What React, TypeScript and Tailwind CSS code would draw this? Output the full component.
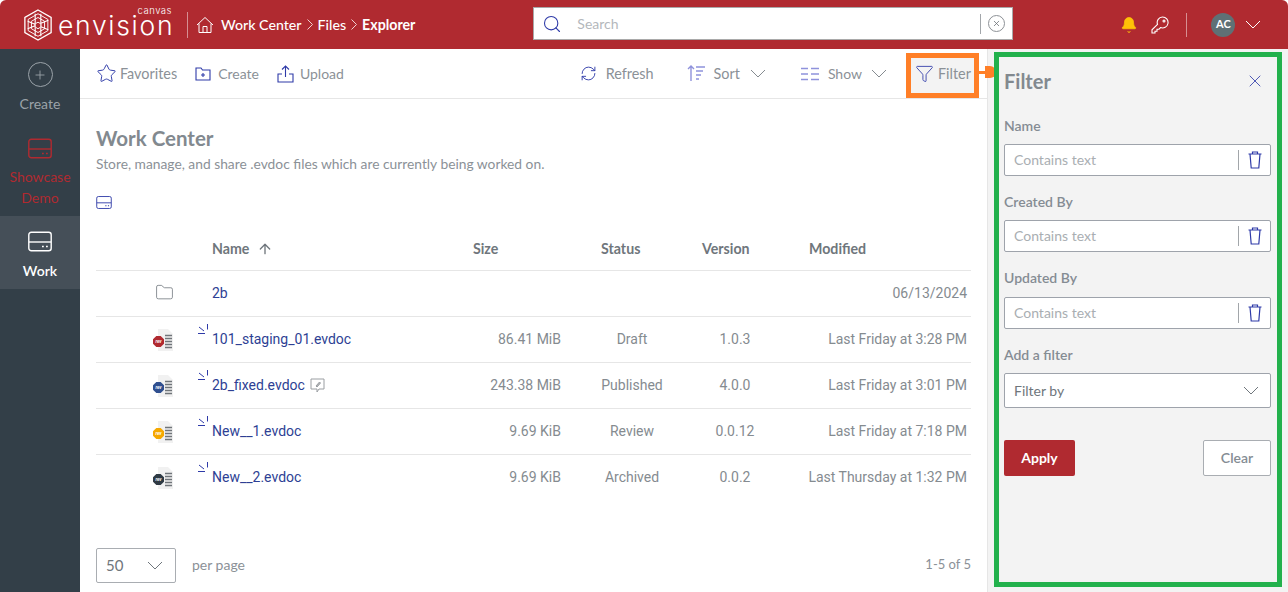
import React from "react";
import { ArrowUp, Search, Bell, Star, RefreshCw, Filter, Folder, Plus, X } from "lucide-react";

const lato = { fontFamily: '"Lato", "Noto Sans", sans-serif' };
const roboto = { fontFamily: 'Roboto, "Noto Sans", sans-serif' };

function Drive({ className }: { className: string }) {
  return (
    <svg viewBox="0 0 24 20" fill="none" stroke="currentColor" strokeWidth="1.4" className={className}>
      <rect x="0.8" y="0.8" width="22.4" height="18.4" rx="2.5" />
      <path d="M1 10.500h22" />
      <path d="M14 15h1.800M18 15h1.800" strokeWidth="1.600" />
    </svg>
  );
}

function Chev({ className = "" }: { className?: string }) {
  return (
    <svg viewBox="0 0 16 9" fill="none" stroke="currentColor" strokeWidth="1" className={`h-[9px] w-[16px] shrink-0 ${className}`}>
      <path d="M1 1l7 7 7-7" />
    </svg>
  );
}

function Crumb() {
  return (
    <svg viewBox="0 0 6 11" fill="none" stroke="#f0d0d0" strokeWidth="1" className="mx-[5px] h-[11px] w-[6px] shrink-0">
      <path d="M.5.5l5 5-5 5" />
    </svg>
  );
}

function TrashIcon() {
  return (
    <svg viewBox="0 0 14 18" fill="none" stroke="#2e3aa8" strokeWidth="1.200" className="h-[18px] w-[14px]">
      <path d="M.5 3h13M4.500 3V1h5v2M2 3l1.200 14h7.600L12 3" />
    </svg>
  );
}

function Logo() {
  return (
    <svg viewBox="0 0 32 34" fill="none" stroke="white" strokeWidth="1" className="h-[32px] w-[30px] shrink-0">
      <path d="M16 1 30 9v16l-14 8-14-8V9z" strokeWidth="1.400" />
      <path d="M16 5 26.500 11v12L16 29 5.500 23V11z" />
      <path d="M16 9l7 4v8l-7 4-7-4v-8z" />
      <path d="M13 5v24M19 5v24M5 13l22 9M5 21l22-9" strokeWidth="1.200" />
      <path d="M16 14l3 1.700v3.400L16 21l-3-1.900v-3.400z" fill="#b02a30" />
    </svg>
  );
}

function Tool({ icon, label, className = "", textClass = "text-[14px]" }: { icon: React.ReactNode; label: string; className?: string; textClass?: string }) {
  return (
    <div className={`flex items-center ${className}`}>
      {icon}
      <span className={`${textClass} text-[#8b9197]`}>{label}</span>
    </div>
  );
}

function FileIcon({ color }: { color: string }) {
  return (
    <svg viewBox="0 0 20 22" className="h-[22px] w-[20px]">
      <path d="M5 0h10l5 5v17H5z" fill="#f1f1f1" />
      <path d="M12 6.500h7M12 9.500h7M12 12.500h7M12 15.500h7M12 18.500h7" stroke="#70757a" strokeWidth="1.400" />
      <path d="M3.300 7h4.400L11 10.300v4.400L7.700 18H3.300L0 14.700v-4.400z" fill={color} />
      <text x="5.500" y="14" textAnchor="middle" fontSize="4.500" fontStyle="italic" fontWeight="700" fill="#fff" fontFamily="Roboto, sans-serif">rev</text>
    </svg>
  );
}

function Shortcut() {
  return (
    <svg viewBox="0 0 11 11" fill="none" stroke="#2e3aa8" strokeWidth="1" className="absolute left-[-14px] top-[-5px] h-[11px] w-[11px]">
      <path d="M0 9.500h7M1 3l5 4M9.500 0v5.500" />
    </svg>
  );
}

function Note() {
  return (
    <svg viewBox="0 0 15 15" fill="none" stroke="#9a9ea2" strokeWidth="1" className="ml-[5px] h-[15px] w-[15px]">
      <path d="M1 1h13v10H9l-2 3v-3H1z" />
      <path d="M6 8l3.500-4 1 1L7 9z" fill="#b5b8ba" />
    </svg>
  );
}

function TextFilter({ label, labelClass = "h-[28px]" }: { label: string; labelClass?: string }) {
  return (
    <div className="flex flex-col">
      <div className={`${labelClass} text-[14px] font-semibold leading-[20px] text-[#858c93]`}>{label}</div>
      <div className="flex h-[32px] items-center rounded-[2px] border border-[#9ea3ab] bg-white pl-[9px]">
        <span className="-mt-[2px] flex-1 text-[14px] text-[#a9aeb2]">Contains text</span>
        <div className="h-[20px] w-px bg-[#a2a6aa]" />
        <div className="flex w-[31px] justify-center">
          <TrashIcon />
        </div>
      </div>
    </div>
  );
}

const rows = [
  { name: "101_staging_01.evdoc", size: "86.41 MiB", status: "Draft", ver: "1.0.3", mod: "Last Friday at 3:28 PM", color: "#b02a30" },
  { name: "2b_fixed.evdoc", size: "243.38 MiB", status: "Published", ver: "4.0.0", mod: "Last Friday at 3:01 PM", color: "#2f4f8f", note: true },
  { name: "New__1.evdoc", size: "9.69 KiB", status: "Review", ver: "0.0.12", mod: "Last Friday at 7:18 PM", color: "#f5a800" },
  { name: "New__2.evdoc", size: "9.69 KiB", status: "Archived", ver: "0.0.2", mod: "Last Thursday at 1:32 PM", color: "#2f3a44" },
];

const grid = "grid grid-cols-[116px_261px_88px_102px_92px_1fr] items-center";

export default function App() {
  return (
    <div className="relative flex h-[592px] w-[1288px] flex-col overflow-hidden bg-white" style={lato}>
      <header className="flex h-[49px] shrink-0 items-center rounded-t-[6px] bg-[#b02a30] text-white">
        <div className="ml-[23px] flex items-center">
          <Logo />
          <div className="relative ml-[5px] mt-[1px] w-[114px] text-[26.5px] font-light leading-[18px] tracking-[1.7px]" style={{ fontFamily: 'Inter, sans-serif' }}>
            envision
            <span className="absolute right-0 top-[-9px] text-[9.5px] leading-[8px] tracking-[0.5px]">canvas</span>
          </div>
        </div>
        <div className="ml-[15px] h-[26px] w-px bg-[#d68f92]" />
        <svg viewBox="0 0 18 18" fill="none" stroke="white" strokeWidth="1" className="ml-[8px] h-[18px] w-[18px]">
          <path d="M1 9 9 1.500 17 9M3 7.500V16.500h12V7.500M7 16.500v-6h4v6" />
        </svg>
        <span className="ml-[7px] text-[14.2px] font-medium">Work Center</span>
        <Crumb />
        <span className="text-[14.2px] font-medium">Files</span>
        <Crumb />
        <span className="text-[14.2px] font-bold">Explorer</span>
        <div className="ml-[118px] -mt-[2px] flex h-[33px] w-[480px] items-center border border-[#a9a9a9] bg-white">
          <Search size={20} strokeWidth={1.300} className="ml-[8px] text-[#2e3aa8]" />
          <span className="ml-[15px] flex-1 text-[14px] text-[#b4b8bc]">Search</span>
          <div className="h-[20px] w-px bg-[#a2a6aa]" />
          <div className="mx-[7px] flex h-[17px] w-[17px] items-center justify-center rounded-full border border-[#8d9196]">
            <X size={9} className="text-[#666b70]" strokeWidth={2} />
          </div>
        </div>
        <Bell size={18} fill="#ffc107" strokeWidth={1} className="ml-[107px] text-[#ffc107]" />
        <svg viewBox="0 0 18 18" fill="none" stroke="white" strokeWidth="1.100" className="ml-[13px] h-[18px] w-[18px]">
          <path d="M11.500 1a5.500 5.500 0 1 1-2 10.600L8 13.200H6v2H4v1.800H1v-3.200l5.500-5.500A5.500 5.500 0 0 1 11.500 1z" />
          <circle cx="13" cy="5" r="1" />
        </svg>
        <div className="ml-[17px] h-[24px] w-px bg-[#d68f92]" />
        <div className="ml-[24px] flex h-[24px] w-[24px] items-center justify-center rounded-full bg-[#5f7075] text-[11px] font-bold">AC</div>
        <Chev className="ml-[10px]" />
      </header>

      <div className="flex min-h-0 flex-1">
        <aside className="flex w-[80px] shrink-0 flex-col bg-[#333f48] text-[14px]">
          <div className="flex h-[71px] flex-col items-center pt-[13px] text-[#9ba3a9]">
            <div className="flex h-[25px] w-[25px] items-center justify-center rounded-full border-[1.5px] border-[#9ba3a9]">
              <Plus size={14} strokeWidth={1.500} />
            </div>
            <span className="mt-[7px] leading-[20px]">Create</span>
          </div>
          <div className="flex h-[96px] flex-col items-center pt-[18px] text-[#b02a30]">
            <Drive className="h-[21px] w-[24px]" />
            <span className="mt-[7px] text-center leading-[21px]">Showcase<br />Demo</span>
          </div>
          <div className="flex h-[73px] flex-col items-center bg-[#454f58] pt-[15px] text-white">
            <Drive className="h-[21px] w-[24px]" />
            <span className="mt-[9px] font-semibold leading-[20px]">Work</span>
          </div>
        </aside>

        <main className="flex min-w-0 flex-1 flex-col border-r border-[#e6e6e6]">
          <div className="flex h-[50px] shrink-0 items-center border-b border-[#e6e6e6] pl-[16px] pr-[12px]">
            <Tool label="Favorites" textClass="text-[14.4px]" icon={<Star size={21} strokeWidth={1.100} className="mr-[3px] text-[#2e3aa8]" />} />
            <Tool label="Create" className="ml-[18px]" icon={
              <svg viewBox="0 0 16 14" fill="none" stroke="#2e3aa8" strokeWidth="1.100" className="mr-[7px] h-[14px] w-[16px]">
                <path d="M1 1h5l1.500 2H15v10H1zM8 6v4M6 8h4" />
              </svg>} />
            <Tool label="Upload" className="ml-[18px]" icon={
              <svg viewBox="0 0 17 18" fill="none" stroke="#2e3aa8" strokeWidth="1.100" className="mr-[6px] h-[18px] w-[17px]">
                <path d="M8.500 12V1M5 4.500 8.500 1 12 4.500M5 9H1v8h15V9h-4" />
              </svg>} />
            <div className="ml-auto flex items-center">
              <Tool label="Refresh" textClass="text-[14.4px]" icon={<RefreshCw size={17} strokeWidth={1.300} className="mr-[9px] text-[#2e3aa8]" />} />
              <Tool label="Sort" textClass="text-[14.4px]" className="ml-[33px]" icon={
                <svg viewBox="0 0 18 16" fill="none" stroke="#8f92dc" strokeWidth="1.400" className="mr-[9px] h-[16px] w-[18px]">
                  <path d="M4 16V1M1 4l3-3 3 3M9 2h9M9 6h7M9 10h5M9 14h3" />
                </svg>} />
              <Chev className="ml-[10px] text-[#858b90]" />
              <Tool label="Show" className="ml-[35px]" icon={
                <svg viewBox="0 0 18 14" fill="none" stroke="#8f92dc" strokeWidth="1.600" className="mr-[9px] h-[14px] w-[18px]">
                  <path d="M0 1.500h7M0 7h7M0 12.500h7M10 1.500h8M10 7h8M10 12.500h8" />
                </svg>} />
              <Chev className="ml-[9px] text-[#858b90]" />
              <div className="ml-[24px] flex h-[40px] w-[64px] items-center bg-[#f3f3f3] pl-[4px]">
                <Filter size={19} strokeWidth={1.100} className="mr-[4px] text-[#2e3aa8]" />
                <span className="text-[14.4px] text-[#8b9197]">Filter</span>
              </div>
            </div>
          </div>

          <div className="flex min-h-0 flex-1 flex-col pl-[16px] pr-[16px]">
            <h1 className="mt-[26px] text-[20.5px] font-bold leading-[26px] text-[#82898f]">Work Center</h1>
            <p className="mt-[3px] text-[13.8px] leading-[20px] text-[#8b9197]">Store, manage, and share .evdoc files which are currently being worked on.</p>
            <Drive className="mt-[22px] h-[13px] w-[16px] text-[#2e3aa8]" />
            <div className={`${grid} mt-[18px] h-[44px] border-b border-[#e6e6e6] pt-px text-[14.2px] font-bold text-[#6f767c]`}>
              <div />
              <div className="flex items-center">Name<ArrowUp size={16} strokeWidth={2} className="ml-[8px]" /></div>
              <div>Size</div>
              <div className="pl-[40px]">Status</div>
              <div className="pl-[39px]">Version</div>
              <div className="pl-[54px]">Modified</div>
            </div>
            <div className={`${grid} h-[46px] border-b border-[#e6e6e6] text-[14px]`} style={roboto}>
              <div className="flex justify-center pb-[2px] pl-[20px]"><Folder size={19} strokeWidth={1} className="text-[#6f767c]" /></div>
              <div className="text-[#2e3f94]">2b</div>
              <div /><div /><div />
              <div className="pr-[4px] text-right text-[#858b90]">06/13/2024</div>
            </div>
            {rows.map((r, i) => (
              <div key={r.name} className={`${grid} h-[46px] border-b text-[14px] text-[#858b90] ${i < 3 ? "border-[#e6e6e6]" : "border-transparent"}`} style={roboto}>
                <div className="flex justify-center pl-[18px]"><FileIcon color={r.color} /></div>
                <div className="flex items-center text-[#2e3f94]">
                  <span className="relative"><Shortcut />{r.name}</span>
                  {r.note && <Note />}
                </div>
                <div className="text-right">{r.size}</div>
                <div className="pl-[40px] text-center">{r.status}</div>
                <div className="pl-[52px] text-center">{r.ver}</div>
                <div className="pr-[4px] text-right">{r.mod}</div>
              </div>
            ))}
            <div className="mt-auto mb-[9px] flex items-center">
              <div className="flex h-[35px] w-[80px] items-center justify-between rounded-[2px] border border-[#a9adb2] pl-[9px] pr-[12px] text-[15px] text-[#6f767c]">
                50<Chev />
              </div>
              <span className="ml-[16px] -mt-[3px] text-[14px] text-[#8b9197]">per page</span>
              <span className="ml-auto -mt-[2px] text-[13px] text-[#8b9197]">1-5 of 5</span>
            </div>
          </div>
        </main>

        <section className="flex w-[300px] shrink-0 flex-col bg-[#f3f3f3] pl-[16px] pr-[17px]">
          <div className="mt-[20px] flex h-[24px] items-center justify-between">
            <h2 className="text-[20px] font-bold text-[#82898f]">Filter</h2>
            <X size={20} strokeWidth={1} className="mr-[6px] text-[#2e3aa8]" />
          </div>
          <div className="mt-[23px] flex flex-col gap-[16px]">
            <TextFilter label="Name" />
            <TextFilter label="Created By" />
            <TextFilter label="Updated By" labelClass="h-[29px]" />
          </div>
          <div className="mt-[16px] h-[28px] text-[14px] font-semibold leading-[20px] text-[#858c93]">Add a filter</div>
          <div className="flex h-[35px] items-center justify-between rounded-[2px] border border-[#9ea3ab] bg-white pl-[9px] pr-[11px] text-[14px] text-[#6f767c]">
            Filter by<Chev />
          </div>
          <div className="mt-[32px] flex justify-between">
            <div className="flex h-[36px] w-[71px] items-center justify-center rounded-[2px] bg-[#b02a30] pb-[2px] text-[14px] font-bold text-white">Apply</div>
            <div className="flex h-[36px] w-[68px] items-center justify-center rounded-[2px] border border-[#a9adb2] bg-white pb-[2px] text-[14px] font-semibold text-[#858c93]">Clear</div>
          </div>
        </section>
      </div>

      <div className="pointer-events-none absolute left-[906px] top-[53px] h-[45px] w-[73px] border-[5px] border-[#ff7f27]" />
      <div className="pointer-events-none absolute left-[979px] top-[71px] h-[3px] w-[10px] bg-[#ff7f27]" />
      <div className="pointer-events-none absolute left-[985px] top-[66px] h-[12px] w-[11px] rounded-r-full bg-[#ff7f27]" />
      <div className="pointer-events-none absolute left-[994px] top-[52px] h-[535px] w-[288px] border-[5px] border-[#22b14c]" />
    </div>
  );
}
